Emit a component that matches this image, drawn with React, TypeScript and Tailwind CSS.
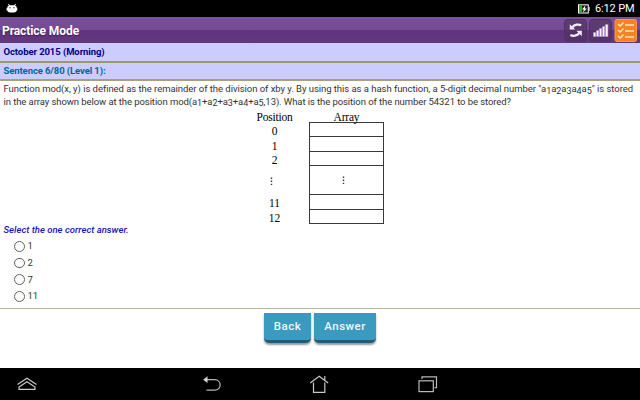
import React from "react";

function StatusBar() {
  return (
    <div className="flex h-[17px] items-center justify-between bg-black pl-[6px] pr-[6px]">
      <svg width="12" height="9" viewBox="0 0 12 9">
        <path d="M2.2 0.3 L4 1.6 M9.8 0.3 L8 1.6" stroke="#fff" strokeWidth="1" />
        <rect x="1.2" y="1.2" width="9.6" height="7.4" rx="3" fill="#fff" />
        <rect x="0.4" y="4" width="11" height="2.6" rx="1" fill="#fff" />
        <circle cx="3.9" cy="3.7" r="0.7" fill="#444" />
        <circle cx="7.9" cy="3.7" r="0.7" fill="#444" />
      </svg>
      <div className="flex items-center gap-[5px]">
        <svg width="12" height="10" viewBox="0 0 12 10">
          <rect x="0.5" y="0.8" width="9.8" height="8.2" fill="#1d1d1d" stroke="#f4fff4" />
          <rect x="1" y="1.3" width="3" height="7.2" fill="#22b52e" />
          <rect x="10.3" y="3" width="1.4" height="3.8" fill="#ddd" />
          <path d="M7.4 1.6 L4 5.4 H5.8 L5 8.4 L8.9 4.4 H6.8 Z" fill="#fff" />
        </svg>
        <span className="w-[39px] whitespace-nowrap text-[11px] leading-[17px] tracking-[-0.15px] text-white">6:12 PM</span>
      </div>
    </div>
  );
}

function Header() {
  return (
    <div className="flex h-[26px] items-center justify-between bg-[linear-gradient(#7a5099_0px,#754a96_13px,#5f347e_13px,#63387f_26px)] pl-[2px] pr-[3px]">
      <span className="pt-[2px] text-[12px] font-bold leading-[24px] tracking-[-0.08px] text-white [text-shadow:0_1px_1px_#3d1c55]">Practice Mode</span>
      <div className="flex gap-[2px]">
        <svg width="23" height="23" viewBox="0 0 23 23">
          <rect x="0.5" y="0.5" width="22" height="22" rx="3" fill="#4f315f" fillOpacity=".65" stroke="#543266" />
          <path d="M17.2 6.3 C14.5 5 10.5 5.4 8.4 8.2 M6.4 16 C9 17.4 13.2 17 15.2 14.2" fill="none" stroke="#f3eef5" strokeWidth="2.3" />
          <path d="M5.8 5.2 V10.6 H11.2 Z M17.8 17.2 V11.8 H12.4 Z" fill="#f3eef5" />
        </svg>
        <svg width="23" height="23" viewBox="0 0 23 23">
          <rect x="0.5" y="0.5" width="22" height="22" rx="3" fill="#4f315f" fillOpacity=".65" stroke="#543266" />
          <path d="M4.5 13.5h2.2v4h-2.2z M7.5 11.5h2.2v6h-2.2z M10.5 9.5h2.2v8h-2.2z M13.5 7.5h2.2v10h-2.2z M16.5 5.5h2.4v12h-2.4z" fill="#fff" stroke="#bd8ddd" strokeWidth=".6" />
        </svg>
        <svg width="23" height="23" viewBox="0 0 23 23">
          <rect x="1" y="0.5" width="21.5" height="22" rx="2" fill="#f58420" stroke="#f79a45" />
          <path d="M4 5 L6.2 7 L9.5 3.5 M4 11 L6.2 13 L9.5 9.5 M4 17 L6.2 19 L9.5 15.5" fill="none" stroke="#fde3c4" strokeWidth="1.5" />
          <path d="M11 6 H20 M11 12 H20 M11 18 H20" stroke="#fde3c4" strokeWidth="1.6" />
        </svg>
      </div>
    </div>
  );
}

function Sub({ n }: { n: number }) {
  return <span className="relative top-[1.5px] text-[9px]">{n}</span>;
}

function Question() {
  return (
    <div className="h-[30px] whitespace-nowrap pl-[3.5px] pt-[2px] text-[9.5px] leading-[12.5px] text-[#333]">
      <div className="tracking-[-0.045px]">
        Function mod(x, y) is defined as the remainder of the division of xby y. By using this as a hash function, a 5-digit decimal number "a<Sub n={1} />a<Sub n={2} />a<Sub n={3} />a<Sub n={4} />a<Sub n={5} />" is stored
      </div>
      <div className="tracking-[-0.08px]">
        in the array shown below at the position mod(a<Sub n={1} />+a<Sub n={2} />+a<Sub n={3} />+a<Sub n={4} />+a<Sub n={5} />,13). What is the position of the number 54321 to be stored?
      </div>
    </div>
  );
}

function Dots() {
  return (
    <svg width="3" height="9" viewBox="0 0 3 9">
      <path d="M.8 .5h1.4v1.4h-1.4z M.8 3.6h1.4v1.4h-1.4z M.8 6.7h1.4v1.4h-1.4z" fill="#333" />
    </svg>
  );
}

function ArrayFigure() {
  return (
    <div className="flex h-[112px] pl-[256px] font-['Liberation_Serif',serif] text-[11.5px] leading-[13px] text-black">
      <div className="flex w-[37px] flex-col items-center">
        <span className="h-[14px] shrink-0 tracking-[-0.2px]">Position</span>
        <span className="h-[14.5px] shrink-0">0</span>
        <span className="h-[14.5px] shrink-0">1</span>
        <span className="h-[14.5px] shrink-0">2</span>
        <span className="flex h-[28.5px] shrink-0 items-center pb-[2px] pr-[7px]"><Dots /></span>
        <span className="h-[14.5px] shrink-0">11</span>
        <span className="h-[14.5px] shrink-0">12</span>
      </div>
      <div className="ml-[16px] flex w-[75px] flex-col">
        <span className="h-[11px] text-center tracking-[-0.2px]">Array</span>
        <div className="flex flex-col border border-[#3a3a3a]">
          <div className="h-[14px] border-b border-[#3a3a3a]" />
          <div className="h-[15px] border-b border-[#3a3a3a]" />
          <div className="h-[14px] border-b border-[#3a3a3a]" />
          <div className="flex h-[29px] items-center justify-center border-b border-[#3a3a3a] pr-[6px]"><Dots /></div>
          <div className="h-[15px] border-b border-[#3a3a3a]" />
          <div className="h-[13px]" />
        </div>
      </div>
    </div>
  );
}

function Option({ label }: { label: string }) {
  return (
    <label className="flex h-[16.7px] items-center gap-[3px] pl-[14px] text-[9.5px] leading-[16px] text-[#333]">
      <span className="h-[10.5px] w-[10.5px] rounded-full border-[1.3px] border-[#606060]" />
      {label}
    </label>
  );
}

function NavBar() {
  return (
    <div className="flex h-[32px] items-center bg-black pl-[16px]">
      <svg width="22" height="16" viewBox="0 0 22 16" fill="none" stroke="#c8c8c8" strokeWidth="1.2">
        <path d="M1.5 8.4 L11 2.3 L20.5 8.4" />
        <path d="M3 11 L11 5.8 L19 11 V13.4 H3 Z" />
      </svg>
      <svg className="ml-[164px]" width="20" height="18" viewBox="0 0 20 18" fill="none" stroke="#b8b8b8" strokeWidth="1.2">
        <path d="M5 4.7 H12.5 C20 4.7 20 15.2 12.5 15.2 H4.5" />
        <path d="M1.2 4.7 L5.5 1.3 V8 Z" fill="#d8d8d8" stroke="none" />
      </svg>
      <svg className="ml-[87px]" width="20" height="20" viewBox="0 0 20 20" fill="none" stroke="#c8c8c8" strokeWidth="1.2">
        <path d="M1.2 9 L10.2 2.2 L19.2 9 M15.8 6.4 V2 M4.5 8.5 V18.3 H15.8 V8.5" />
      </svg>
      <svg className="ml-[88px]" width="22" height="18" viewBox="0 0 22 18" fill="none" stroke="#b8b8b8" strokeWidth="1.2">
        <rect x="2" y="5.8" width="14.3" height="10.8" />
        <path d="M5 4 V1.8 H19.5 V12.7 H17.6" />
      </svg>
    </div>
  );
}

const buttonClass =
  "h-[30px] rounded-b-[5px] border-b-[3px] border-[#205d78] bg-[#3b9ac0] pb-[2px] text-center text-[11.5px] font-medium leading-[24px] text-[#edf8fc] shadow-[0_2px_2px_#999]";

export default function App() {
  return (
    <div className="flex h-[400px] w-[640px] flex-col overflow-hidden bg-white font-[Roboto,sans-serif]">
      <StatusBar />
      <Header />
      <div className="h-[20px] border-b-2 border-[#9a9967] bg-[#ccccff] pl-[3.5px] text-[9.5px] font-bold leading-[18px] tracking-[-0.08px] text-[#00008b]">October 2015 (Morning)</div>
      <div className="h-[18px] border-b-2 border-[#a8a272] bg-[#ccccff] pl-[3.5px] text-[9.5px] font-bold leading-[16px] tracking-[-0.1px] text-[#006699]">Sentence 6/80 (Level 1):</div>
      <Question />
      <ArrayFigure />
      <div className="h-[15px] pl-[3.5px] text-[9.5px] font-medium italic leading-[13px] tracking-[0.02px] text-[#1a13b5]">Select the one correct answer.</div>
      <div className="h-[71px] border-b border-[#b9bb9b]">
        <Option label="1" />
        <Option label="2" />
        <Option label="7" />
        <Option label="11" />
      </div>
      <div className="flex h-[59px] gap-[3px] pl-[264px] pt-[4px]">
        <button className={buttonClass + " w-[47px] tracking-[0.45px]"}>Back</button>
        <button className={buttonClass + " w-[62px] tracking-[0.45px]"}>Answer</button>
      </div>
      <NavBar />
    </div>
  );
}
